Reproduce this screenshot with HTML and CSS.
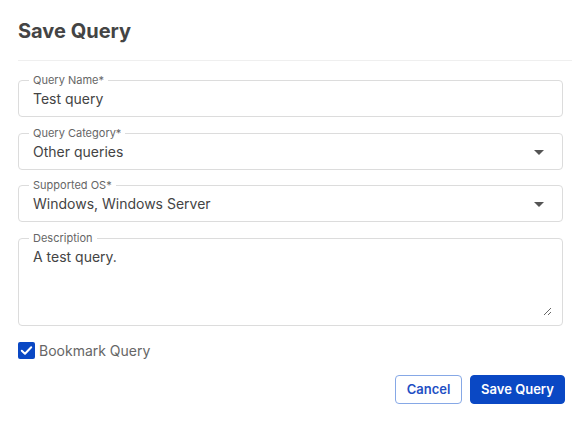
FILE: index.html
```html
<!DOCTYPE html>
<html lang="en">
<head>
<meta charset="utf-8">
<title>Save Query</title>
<link rel="stylesheet" href="styles.css">
</head>
<body>
<div class="dialog">
  <h1 class="title">Save Query</h1>
  <div class="divider"></div>
  <form class="form">
    <fieldset class="field">
      <legend class="label">Query Name*</legend>
      <input class="control" type="text" value="Test query">
    </fieldset>
    <fieldset class="field field-tight">
      <legend class="label">Query Category*</legend>
      <div class="select">
        <span class="control-text">Other queries</span>
        <span class="caret"></span>
      </div>
    </fieldset>
    <fieldset class="field">
      <legend class="label">Supported OS*</legend>
      <div class="select">
        <span class="control-text">Windows, Windows Server</span>
        <span class="caret"></span>
      </div>
    </fieldset>
    <fieldset class="field field-area">
      <legend class="label">Description</legend>
      <textarea class="area">A test query.</textarea>
    </fieldset>
    <label class="check-row">
      <span class="checkbox">
        <svg width="17" height="17" viewBox="0 0 17 17"><path d="M3.8 8.8 L7 11.8 L13.2 5.2" fill="none" stroke="#fff" stroke-width="2" stroke-linecap="round" stroke-linejoin="round"/></svg>
      </span>
      <span class="check-label">Bookmark Query</span>
    </label>
    <div class="actions">
      <button type="button" class="btn btn-outline">Cancel</button>
      <button type="button" class="btn btn-primary">Save Query</button>
    </div>
  </form>
</div>
</body>
</html>
```
FILE: styles.css
```css
* { box-sizing: border-box; }
html, body { margin: 0; padding: 0; background: #fff; }
body { font-family: Inter, "Noto Sans", sans-serif; color: #444; }

.dialog { padding: 19px 0 0 18px; width: 572px; }

.title {
  margin: 0;
  font-size: 20px;
  line-height: 24px;
  font-weight: 700;
  color: #444;
}

.divider { height: 1px; background: #efefef; margin-top: 17px; }

.form { width: 547px; margin-top: 13px; display: flex; flex-direction: column; }

.field {
  width: 545px;
  margin: 0 0 10px 0;
  padding: 0 10px 7px 10px;
  border: 1px solid #dcdcdc;
  border-radius: 4px;
  min-width: 0;
}

.field-tight { margin-bottom: 9px; }

.label {
  padding: 0 4px;
  font-size: 11px;
  line-height: 12px;
  height: 12px;
  color: #666;
}

.control {
  display: block;
  width: 100%;
  height: 20px;
  margin-top: 3px;
  padding: 0 4px;
  border: 0;
  outline: none;
  font: 14px/20px Inter, "Noto Sans", sans-serif;
  color: #444;
  background: transparent;
}

.select {
  display: flex;
  align-items: center;
  justify-content: space-between;
  margin-top: 3px;
  padding: 0 4px;
  height: 20px;
}

.control-text { font-size: 14px; line-height: 20px; color: #444; }

.caret {
  width: 0; height: 0;
  border-left: 5px solid transparent;
  border-right: 5px solid transparent;
  border-top: 5px solid #555;
  margin-right: 4px;
}

.field-area { padding-bottom: 9px; margin-bottom: 16px; }

.area {
  display: block;
  width: 100%;
  height: 69px;
  margin-top: 3px;
  padding: 0 4px;
  border: 0;
  outline: none;
  resize: vertical;
  font: 14px/20px Inter, "Noto Sans", sans-serif;
  color: #444;
  background: transparent;
}

.check-row { display: flex; align-items: center; gap: 4px; height: 17px; }

.checkbox {
  width: 17px; height: 17px;
  border-radius: 2px;
  background: #0a48c4;
  display: flex;
}

.check-label { font-size: 14px; line-height: 17px; color: #666; }

.actions { display: flex; justify-content: flex-end; gap: 8px; margin-top: 16px; }

.btn {
  height: 29px;
  border-radius: 4px;
  font: 600 13px/1 Inter, "Noto Sans", sans-serif;
  padding: 0;
  white-space: nowrap;
  cursor: pointer;
}

.btn-outline { width: 67px; background: #fff; color: #1f4fc4; border: 1px solid #86a8e6; }
.btn-primary { width: 95px; background: #0a48c4; color: #fff; border: 1px solid #0a48c4; }
```
